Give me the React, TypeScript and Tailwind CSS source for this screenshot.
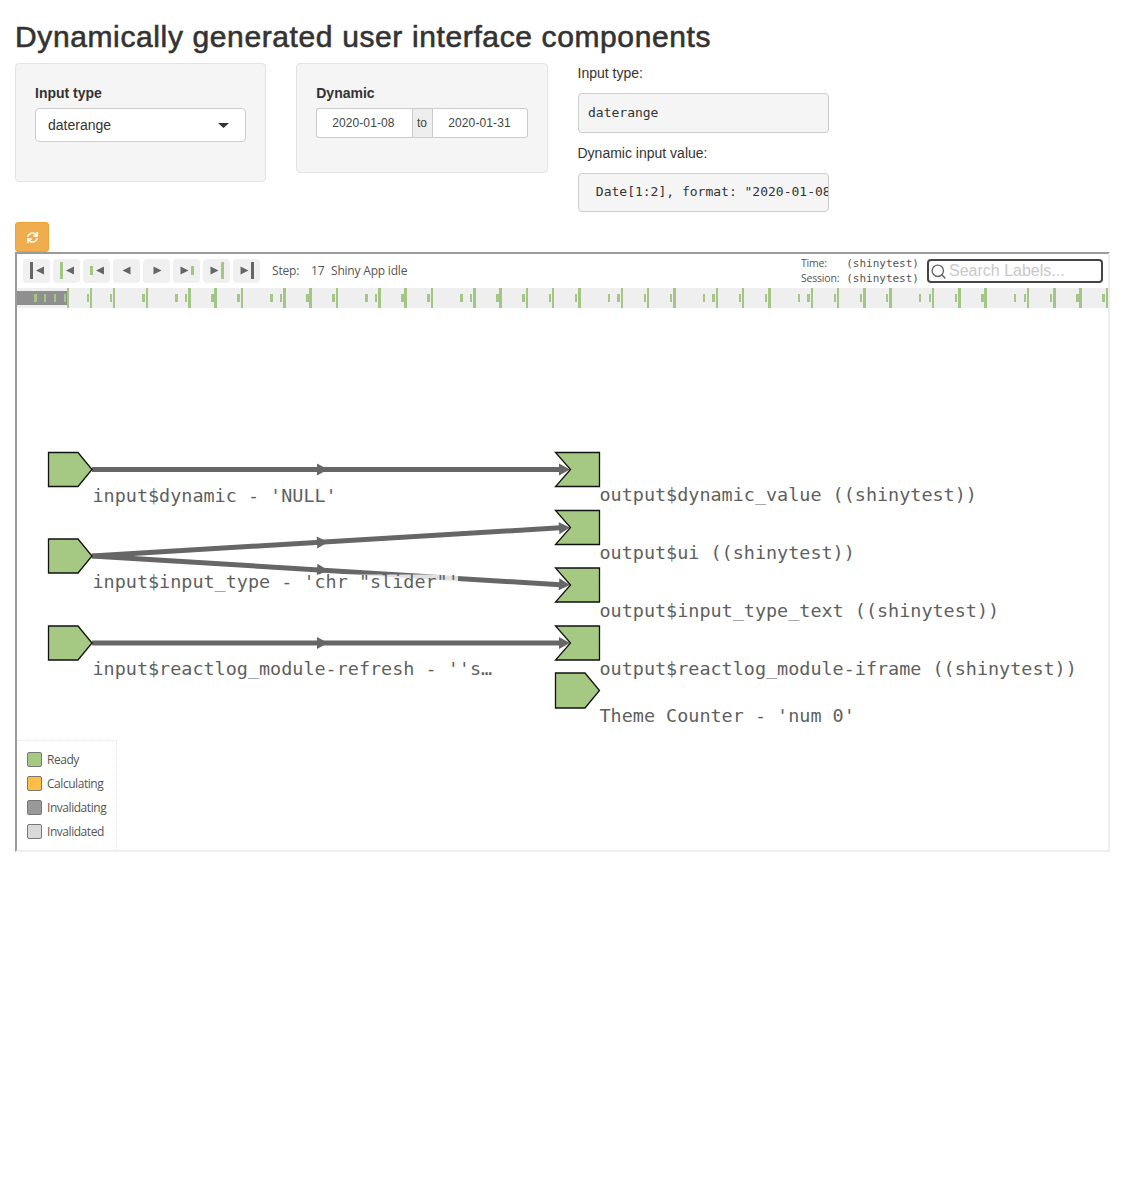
import { Search } from 'lucide-react';
import { FaSync } from 'react-icons/fa';

const GREEN = '#a3c586';

// timeline ticks, page x coordinates
const shortTicks: [number, number][] = [
  [34, 37], [44, 46], [54, 56], [64, 66], [87, 89], [110, 112], [142, 145], [175, 178], [185, 187], [211, 214],
  [237, 240], [270, 273], [280, 282], [306, 309], [332, 335], [365, 368], [375, 377], [401, 404], [427, 430],
  [460, 463], [470, 472], [496, 499], [522, 525], [549, 551], [575, 577], [608, 610], [617, 620], [644, 646],
  [670, 672], [703, 705], [712, 715], [739, 741], [765, 767], [798, 800], [807, 810], [834, 836], [860, 862],
  [886, 888], [919, 921], [929, 931], [955, 957], [981, 984], [1014, 1016], [1024, 1026], [1050, 1052],
  [1076, 1079], [1102, 1105],
];
const tallTicks: [number, number][] = [
  [67, 69], [90, 92], [113, 115], [146, 148], [188, 191], [214, 217], [241, 243], [283, 286], [309, 312],
  [336, 338], [378, 381], [404, 407], [431, 433], [473, 476], [499, 502], [526, 528], [552, 554], [578, 581],
  [621, 623], [647, 649], [673, 676], [716, 718], [742, 744], [768, 771], [811, 813], [837, 839], [863, 866],
  [889, 892], [932, 934], [958, 961], [984, 987], [1027, 1029], [1053, 1056], [1079, 1082], [1106, 1108],
];

const stepButtons = [
  { tri: 13, dir: 'left', bar: 7, color: '#666666', y: 3, h: 17 },
  { tri: 13, dir: 'left', bar: 7, color: GREEN, y: 3, h: 17 },
  { tri: 13, dir: 'left', bar: 7, color: GREEN, y: 7, h: 9 },
  { tri: 9.5, dir: 'left' },
  { tri: 10.5, dir: 'right' },
  { tri: 7.5, dir: 'right', bar: 18, color: GREEN, y: 7, h: 9 },
  { tri: 7.5, dir: 'right', bar: 18, color: GREEN, y: 3, h: 17 },
  { tri: 7.5, dir: 'right', bar: 18, color: '#666666', y: 3, h: 17 },
];

const legend = [
  { label: 'Ready', color: 'bg-[#a5c882]' },
  { label: 'Calculating', color: 'bg-[#ffbf46]' },
  { label: 'Invalidating', color: 'bg-[#999999]' },
  { label: 'Invalidated', color: 'bg-[#d9d9d9]' },
];

const inputNodes = [
  { y: 452.5, label: "input$dynamic - 'NULL'" },
  { y: 539, label: `input$input_type - 'chr "slider"'` },
  { y: 626, label: "input$reactlog_module-refresh - ''s…" },
];

const outputNodes = [
  { y: 452.5, label: 'output$dynamic_value ((shinytest))' },
  { y: 510.5, label: 'output$ui ((shinytest))' },
  { y: 568, label: 'output$input_type_text ((shinytest))' },
  { y: 626, label: 'output$reactlog_module-iframe ((shinytest))' },
];

const edges = [
  { x1: 92, y1: 469.5, x2: 570, y2: 469.5 },
  { x1: 92, y1: 556, x2: 570, y2: 527.5 },
  { x1: 92, y1: 556, x2: 570, y2: 585 },
  { x1: 92, y1: 643, x2: 570, y2: 643 },
];

function Arrow({ x, y, angle }: { x: number; y: number; angle: number }) {
  return <polygon points="-11,-6 0,0 -11,6" fill="#666666" transform={`translate(${x} ${y}) rotate(${angle})`} />;
}

function App() {
  return (
    <div className="min-h-[1200px] bg-white px-[15px] text-[14px] text-[#333333] font-['Liberation_Sans',sans-serif]">
      <h2 className="pt-[20px] pb-[10px] text-[30px] leading-[33px] font-medium tracking-[0.62px] [-webkit-text-stroke:0.6px_#333333]">
        Dynamically generated user interface components
      </h2>

      <div className="grid grid-cols-4 gap-[30px] items-start">
        {/* Input type */}
        <div className="h-[119px] rounded-[4px] border border-[#e3e3e3] bg-[#f5f5f5] px-[19px] pt-[19px]">
          <label className="block h-[25px] font-bold leading-[20px]">Input type</label>
          <div className="flex h-[34px] items-center justify-between rounded-[4px] border border-[#cccccc] bg-white pl-[12px] pr-[16px]">
            <span>daterange</span>
            <svg width="11" height="5" viewBox="0 0 11 5"><polygon points="0,0 11,0 5.5,5" fill="#333333" /></svg>
          </div>
        </div>

        {/* Dynamic */}
        <div className="h-[110px] rounded-[4px] border border-[#e3e3e3] bg-[#f5f5f5] px-[19px] pt-[19px]">
          <label className="block h-[25px] font-bold leading-[20px]">Dynamic</label>
          <div className="flex h-[30px] text-[12px] tracking-[0.1px] text-[#444444]">
            <div className="flex flex-1 items-center justify-center rounded-l-[3px] border border-r-0 border-[#cccccc] bg-white pr-[2px]">2020-01-08</div>
            <div className="flex w-[21px] items-center justify-center border border-[#cccccc] bg-[#eeeeee]">to</div>
            <div className="flex w-[95px] items-center justify-center rounded-r-[3px] border border-l-0 border-[#cccccc] bg-white">2020-01-31</div>
          </div>
        </div>

        {/* Text outputs */}
        <div>
          <p className="h-[30px] leading-[20px]">Input type:</p>
          <pre className="h-[40px] overflow-hidden rounded-[4px] border border-[#cccccc] bg-[#f5f5f5] px-[9.5px] pt-[9.5px] text-[13px] leading-[18.5px] font-['DejaVu_Sans_Mono',monospace]">daterange</pre>
          <p className="mt-[10px] h-[30px] leading-[20px]">Dynamic input value:</p>
          <pre className="h-[39px] overflow-hidden rounded-[4px] border border-[#cccccc] bg-[#f5f5f5] pl-[9.5px] pt-[8.5px] text-[13px] leading-[18.5px] font-['DejaVu_Sans_Mono',monospace]">{' Date[1:2], format: "2020-01-08" "2020-01-31"'}</pre>
        </div>
      </div>

      <button className="mt-[10px] flex h-[30px] w-[34px] items-center justify-center rounded-[3px] border border-[#eea236] bg-[#f0ad4e] text-white">
        <FaSync size={11} />
      </button>

      {/* reactlog iframe */}
      <div className="relative flex h-[600px] w-[1095px] flex-col border-2 border-t-[#9a9a9a] border-l-[#9a9a9a] border-r-[#eeeeee] border-b-[#eeeeee]">
        <div className="flex h-[34px] items-start pl-[6px] pt-[5px] text-[12px] text-[#555555] font-['Open_Sans',sans-serif]">
          <div className="flex gap-[3px]">
            {stepButtons.map((b, i) => (
              <div key={i} className="h-[24px] w-[27px] rounded-[4px] bg-[#f0f0f0]">
                <svg width="27" height="24" viewBox="0 0 27 24">
                  {b.bar !== undefined && <rect x={b.bar} y={b.y} width="3" height={b.h} fill={b.color} />}
                  <polygon
                    points={
                      b.dir === 'left'
                        ? `${b.tri + 8},7.5 ${b.tri + 8},15.5 ${b.tri},11.5`
                        : `${b.tri},7.5 ${b.tri},15.5 ${b.tri + 8},11.5`
                    }
                    fill="#666666"
                  />
                </svg>
              </div>
            ))}
          </div>
          <div className="ml-[12px] flex h-[24px] items-center tracking-[-0.2px]">
            <span className="w-[39px]">Step:</span>
            <span className="w-[20px]">17</span>
            <span>Shiny App idle</span>
          </div>
          <div className="ml-auto mr-[8px] -mt-[3px] flex w-[118px] flex-col text-[10.5px] leading-[15px] tracking-[-0.2px]">
            <div className="flex">
              <span className="w-[46px]">Time:</span>
              <span className="font-['DejaVu_Sans_Mono',monospace] text-[11px] tracking-normal">(shinytest)</span>
            </div>
            <div className="flex">
              <span className="w-[46px]">Session:</span>
              <span className="font-['DejaVu_Sans_Mono',monospace] text-[11px] tracking-normal">(shinytest)</span>
            </div>
          </div>
          <div className="mr-[5px] flex h-[24px] w-[176px] items-center gap-[2px] rounded-[4px] border-2 border-[#444444] bg-white pl-[1px] text-[16px] text-[#c8c8c8] font-['Liberation_Sans',sans-serif]">
            <Search size={17} strokeWidth={2} className="text-[#666666]" />
            <span>Search Labels...</span>
          </div>
        </div>

        <svg className="block h-[20px] w-full shrink-0" viewBox="17 288 1091 20">
          <rect x="17" y="288" width="1091" height="20" fill="#efefef" />
          <rect x="17" y="291" width="50" height="14" fill="#8f8f8f" />
          {shortTicks.map(([a, b]) => (
            <rect key={a} x={a} y="294" width={b - a} height="8" fill={GREEN} />
          ))}
          {tallTicks.map(([a, b]) => (
            <rect key={a} x={a} y="288" width={b - a} height="20" fill={GREEN} />
          ))}
        </svg>

        <div className="relative flex-1">
          <svg className="block h-full w-full" viewBox="17 308 1091 542">
            {edges.map((e, i) => {
              const angle = (Math.atan2(e.y2 - e.y1, e.x2 - e.x1) * 180) / Math.PI;
              const midX = 328;
              const midY = e.y1 + ((e.y2 - e.y1) * (midX - e.x1)) / (e.x2 - e.x1);
              return (
                <g key={i}>
                  <line x1={e.x1} y1={e.y1} x2={e.x2 - 6} y2={e.y2} stroke="#666666" strokeWidth="5" />
                  <Arrow x={midX} y={midY} angle={angle} />
                  <Arrow x={e.x2} y={e.y2} angle={angle} />
                </g>
              );
            })}
            {inputNodes.map((n) => (
              <polygon
                key={n.y}
                points={`48.5,${n.y} 78,${n.y} 92,${n.y + 17} 78,${n.y + 34} 48.5,${n.y + 34}`}
                fill="#a5c882"
                stroke="#111111"
                strokeWidth="1.3"
              />
            ))}
            {outputNodes.map((n) => (
              <polygon
                key={n.y}
                points={`555.5,${n.y} 599.5,${n.y} 599.5,${n.y + 34} 555.5,${n.y + 34} 570.5,${n.y + 17}`}
                fill="#a5c882"
                stroke="#111111"
                strokeWidth="1.3"
              />
            ))}
            <polygon points="555.5,673 585,673 599.5,690.5 585,708 555.5,708" fill="#a5c882" stroke="#111111" strokeWidth="1.3" />
            {/* label background washes out the edge underneath */}
            <rect x="93" y="574.5" width="365" height="16" fill="#ffffff" fillOpacity="0.8" />
            <g className="font-['DejaVu_Sans_Mono',monospace] text-[18.44px] fill-[#5f5f5f]">
              {inputNodes.map((n) => (
                <text key={n.y} x="92.5" y={n.y + 49}>{n.label}</text>
              ))}
              {outputNodes.map((n) => (
                <text key={n.y} x="599.5" y={n.y + 48.5}>{n.label}</text>
              ))}
              <text x="599.5" y="721.5">Theme Counter - 'num 0'</text>
            </g>
          </svg>

          <div className="absolute bottom-0 left-0 flex h-[110px] w-[100px] flex-col gap-[9px] border-t border-r border-dotted border-[#e4e4e4] bg-white pl-[10px] pt-[11px] text-[12px] text-[#555555] font-['Open_Sans',sans-serif]">
            {legend.map((l) => (
              <div key={l.label} className="flex h-[15px] items-center gap-[5px] tracking-[-0.45px]">
                <span className={`h-[15px] w-[15px] rounded-[2px] border border-[#777777] ${l.color}`} />
                <span>{l.label}</span>
              </div>
            ))}
          </div>
        </div>
      </div>
    </div>
  );
}

export default App;
